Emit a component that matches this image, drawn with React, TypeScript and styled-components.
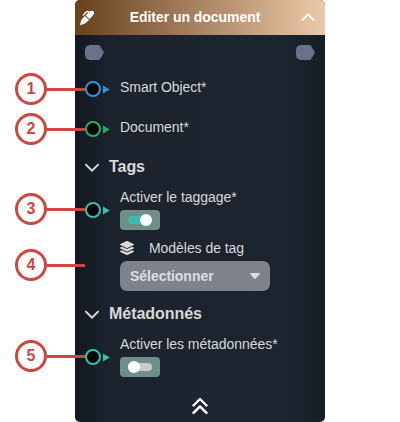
import React from 'react';
import styled, { createGlobalStyle } from 'styled-components';

const GlobalStyle = createGlobalStyle`
  * { box-sizing: border-box; }
  body { margin: 0; background: #fff; }
`;

const Page = styled.main`
  position: relative;
  width: 400px;
  height: 422px;
  padding-left: 75px;
  overflow: hidden;
  font-family: "Liberation Sans", Arial, sans-serif;
`;

const Panel = styled.section`
  display: flex;
  flex-direction: column;
  width: 250px;
  height: 422px;
  border-radius: 5px;
  overflow: hidden;
  color: #d8d9da;
  background: linear-gradient(90deg, #111820 0%, #1c232c 14%, #1c242d 85%, #171d25 100%);
`;

const Header = styled.header`
  display: flex;
  flex: none;
  align-items: center;
  justify-content: space-between;
  height: 35px;
  padding: 0 10px 0 4px;
  color: #fff;
  background: linear-gradient(90deg, #68401e 0%, #ecc9a8 100%);
`;

const Title = styled.h1`
  margin: 0 6px 1px 0;
  font-size: 14px;
  line-height: 18px;
  letter-spacing: -0.04px;
  white-space: nowrap;
`;

const FlowEnds = styled.div`
  display: flex;
  flex: none;
  justify-content: space-between;
  height: 32px;
  padding: 10px 10px 0;
`;

const Field = styled.div<{ $height: number }>`
  display: flex;
  flex: none;
  align-items: center;
  height: ${(p) => p.$height}px;
  padding-left: 10px;
`;

const PortSlot = styled.div<{ $drop: number }>`
  display: flex;
  width: 35px;
  padding-top: ${(p) => p.$drop}px;
`;

const FieldBody = styled.div`
  display: flex;
  flex-direction: column;
  align-items: flex-start;
  gap: 4px;
`;

const Label = styled.span`
  font-size: 14px;
  line-height: 18px;
  letter-spacing: -0.05px;
  white-space: nowrap;
`;

const Section = styled.div<{ $height: number }>`
  display: flex;
  flex: none;
  align-items: center;
  gap: 9px;
  height: ${(p) => p.$height}px;
  padding-left: 9px;
`;

const SectionTitle = styled.h2`
  margin: 0;
  font-size: 16px;
  line-height: 20px;
  letter-spacing: -0.05px;
`;

const Switch = styled.button`
  display: flex;
  align-items: center;
  width: 40px;
  height: 20px;
  padding: 0 8px;
  border: 0;
  border-radius: 4px;
  background: #6e8f8b;
`;

const Track = styled.span<{ $on: boolean }>`
  display: flex;
  align-items: center;
  justify-content: ${(p) => (p.$on ? 'flex-end' : 'flex-start')};
  width: 24px;
  height: 8px;
  border-radius: 4px;
  background: ${(p) => (p.$on ? '#3bb9ad' : '#cbcbcb')};
`;

const Knob = styled.span`
  flex: none;
  width: 12px;
  height: 12px;
  border-radius: 50%;
  background: #fff;
`;

const TagModels = styled.div`
  display: flex;
  flex: none;
  flex-direction: column;
  gap: 4px;
  height: 62px;
  padding: 8px 0 0 45px;
`;

const IconLabel = styled.div`
  display: flex;
  align-items: center;
  gap: 15px;
  height: 18px;
`;

const Select = styled.button`
  display: flex;
  flex: none;
  align-items: center;
  justify-content: space-between;
  width: 150px;
  height: 30px;
  padding: 0 10px;
  border: 0;
  border-radius: 7px;
  color: #dddddf;
  background: #7e828b;
  font: bold 14px/18px "Liberation Sans", Arial, sans-serif;
  letter-spacing: -0.04px;
`;

const Footer = styled.footer`
  display: flex;
  justify-content: center;
  padding-top: 19px;
`;

const Callout = styled.div<{ $y: number }>`
  position: absolute;
  left: 15px;
  top: ${(p) => p.$y - 16}px;
  display: flex;
  align-items: center;
  height: 32px;
`;

const CalloutNumber = styled.span`
  display: flex;
  align-items: center;
  justify-content: center;
  width: 32px;
  height: 32px;
  border: 3px solid #cb473f;
  border-radius: 50%;
  color: #cb473f;
  background: #fff;
  font: bold 16px/20px "Liberation Sans", Arial, sans-serif;
`;

const CalloutLine = styled.span`
  width: 38px;
  height: 3px;
  background: #cb473f;
`;

const Svg = styled.svg`
  display: block;
  flex: none;
`;

function Pen() {
  return (
    <Svg width="16" height="16" viewBox="0 0 16 16">
      <path
        d="M1 15.200 L1.800 11.600 Q2.200 9.600 3.800 8 L6 5.900 L10 9.900 L8 11.900 Q6.500 13.400 4.600 13.900Z M6.600 5.300 L10.600 1.500 Q12.700-.1 14.400 1.300 Q15.700 2.900 14.300 5 L10.600 9.300Z"
        fill="currentColor"
      />
      <path d="M4.300 4.900 L7.200 2 Q8 1.200 9 1.600 L10.400 2.100" fill="none" stroke="currentColor" strokeWidth="1.400" strokeLinecap="round" />
    </Svg>
  );
}

function Chevron({ up = false }: { up?: boolean }) {
  return (
    <Svg width={up ? 14 : 16} height={up ? 9 : 12} viewBox={up ? '0 0 14 9' : '0 0 16 12'}>
      <path
        d={up ? 'M1.4 7 L7 1.400 L12.6 7' : 'M1.9 3.600 L8 9.700 L14.1 3.600'}
        fill="none"
        stroke="currentColor"
        strokeWidth="2"
        strokeLinecap="round"
        strokeLinejoin="miter"
      />
    </Svg>
  );
}

function FlowEnd() {
  return (
    <Svg width="19" height="15" viewBox="0 0 19 15">
      <path d="M5 0 H14.5 L19 7.5 L14.5 15 H5 Q0 14.500 0 10 V5 Q0 .5 5 0Z" fill="#69728b" />
    </Svg>
  );
}

function Port({ color, drop }: { color: string; drop: number }) {
  return (
    <PortSlot $drop={drop}>
      <Svg width="26" height="16" viewBox="0 0 26 16">
        <circle cx="8" cy="8" r="7" fill="#000" stroke={color} strokeWidth="2" />
        <path d="M18 4.5 L24.7 8.5 L18 12.5Z" fill={color} />
      </Svg>
    </PortSlot>
  );
}

function Layers() {
  return (
    <Svg width="14" height="14" viewBox="0 0 512 512" fill="currentColor">
      <path d="M12.4 148 244.5 253.300c7.300 3.300 15.600 3.300 23 0L499.600 148c16.500-7.500 16.500-32.500 0-40L267.500 2.500c-7.300-3.300-15.600-3.300-23 0L12.400 108c-16.500 7.500-16.500 32.500 0 40Zm487.200 88.300-57.900-26.300-161.100 73q-24.600 11.200-49.200 0L70.300 210l-57.900 26.300c-16.500 7.500-16.500 32.500 0 40l232.100 105.200c7.300 3.300 15.600 3.300 23 0l232.100-105.200c16.500-7.500 16.500-32.500 0-40Zm0 127.800-57.700-26.100-161.300 73.100q-24.600 11.200-49.200 0L70.100 338l-57.700 26.100c-16.500 7.500-16.500 32.500 0 40l232.100 105.200c7.300 3.300 15.600 3.300 23 0l232.100-105.200c16.500-7.500 16.500-32.500 0-40Z" />
    </Svg>
  );
}

function Toggle({ on = false }: { on?: boolean }) {
  return (
    <Switch type="button" role="switch" aria-checked={on}>
      <Track $on={on}>
        <Knob />
      </Track>
    </Switch>
  );
}

const callouts = [89, 129, 209, 265, 356];

export default function App() {
  return (
    <>
      <GlobalStyle />
      <Page>
        <Panel>
          <Header>
            <Pen />
            <Title>Editer un document</Title>
            <Chevron up />
          </Header>
          <FlowEnds>
            <FlowEnd />
            <FlowEnd />
          </FlowEnds>
          <Field $height={40}>
            <Port color="#2c97d9" drop={4} />
            <Label>Smart Object*</Label>
          </Field>
          <Field $height={40}>
            <Port color="#27ae60" drop={4} />
            <Label>Document*</Label>
          </Field>
          <Section $height={40}>
            <Chevron />
            <SectionTitle>Tags</SectionTitle>
          </Section>
          <Field $height={44}>
            <Port color="#3bbdb1" drop={2} />
            <FieldBody>
              <Label>Activer le taggage*</Label>
              <Toggle on />
            </FieldBody>
          </Field>
          <TagModels>
            <IconLabel>
              <Layers />
              <Label>Modèles de tag</Label>
            </IconLabel>
            <Select type="button">
              Sélectionner
              <Svg width="10" height="6" viewBox="0 0 10 6">
                <path d="M.7 0 H9.300 Q10.500.3 9.600 1.200 L5.800 5.500 Q5 6.300 4.200 5.500 L.4 1.200 Q-.5.3.7 0Z" fill="currentColor" />
              </Svg>
            </Select>
          </TagModels>
          <Section $height={41}>
            <Chevron />
            <SectionTitle>Métadonnés</SectionTitle>
          </Section>
          <Field $height={44}>
            <Port color="#3bbdb1" drop={2} />
            <FieldBody>
              <Label>Activer les métadonnées*</Label>
              <Toggle />
            </FieldBody>
          </Field>
          <Footer>
            <Svg width="16" height="18" viewBox="0 0 16 18">
              <path d="M1.500 8.500 L8 2 L14.500 8.500 M1.500 15.800 L8 9.300 L14.500 15.800" fill="none" stroke="#fff" strokeWidth="2.400" strokeLinecap="round" strokeLinejoin="round" />
            </Svg>
          </Footer>
        </Panel>
        {callouts.map((y, i) => (
          <Callout key={y} $y={y}>
            <CalloutNumber>{i + 1}</CalloutNumber>
            <CalloutLine />
          </Callout>
        ))}
      </Page>
    </>
  );
}
